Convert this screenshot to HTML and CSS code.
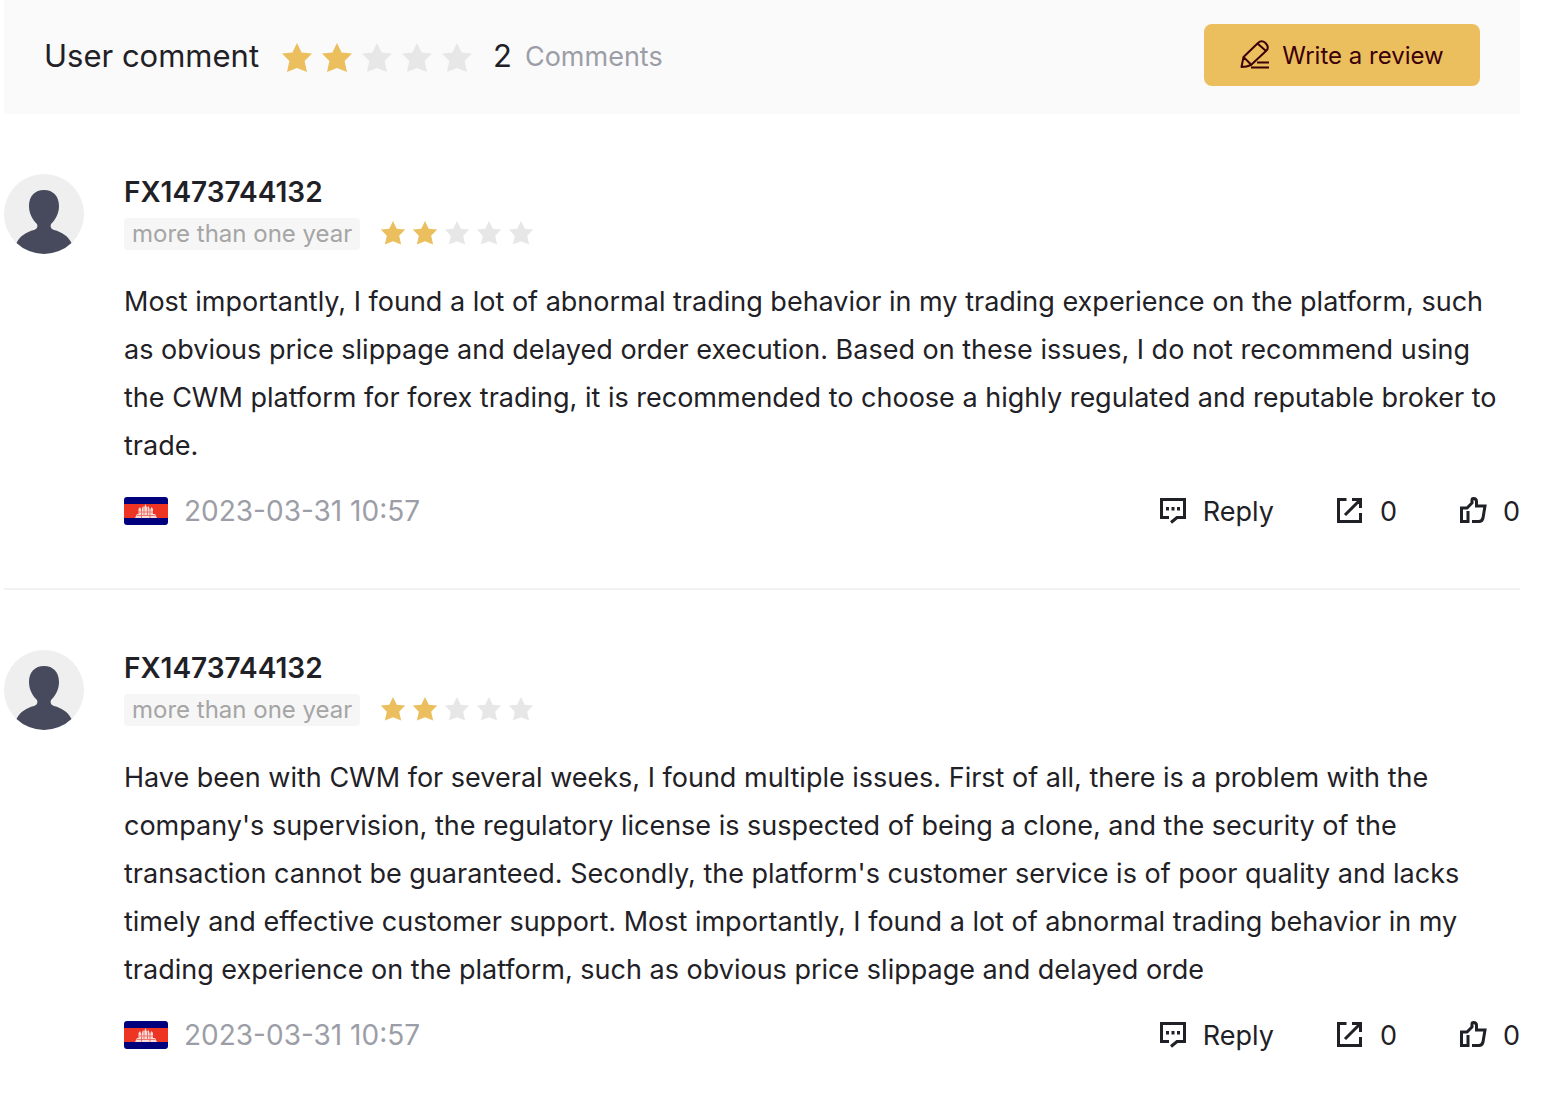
FILE: index.html
```html
<!DOCTYPE html>
<html lang="en">
<head>
  <meta charset="UTF-8" />
  <meta name="viewport" content="width=device-width, initial-scale=1.0" />
  <title>User comment</title>
  <link rel="stylesheet" href="styles.css">
</head>
<body>

  <!-- Shared icons -->
  <svg class="sprite" aria-hidden="true">
    <symbol id="star" viewBox="-1 0 32 32">
      <path d="M15 0 L19.600 9.600 L30 10.600 L22.600 18 L25 29 L15 25 L5 29 L7.400 18 L0 10.600 L10.400 9.600 Z" />
    </symbol>
    <symbol id="avatar" viewBox="0 0 80 80">
      <circle cx="40" cy="40" r="40" fill="#efefef" />
      <path d="M40 16 C49 16 55 22 55 32 C55 40 51 46 47 50 C46 53 47 55 50 56 C58 58 64 62 67.500 69 A40 40 0 0 1 12.500 69 C16 62 22 58 30 56 C33 55 34 53 33 50 C29 46 25 40 25 32 C25 22 31 16 40 16 Z" fill="#464a5c" />
    </symbol>
    <symbol id="flag" viewBox="0 0 44 28">
      <rect width="44" height="28" fill="#00007c" />
      <rect y="7" width="44" height="14" fill="#ee3524" />
      <path d="M11 21 L13 17 H14.500 V12 L16 10 L17.500 13 L19 9 L20 11 L21.500 7 L23 11 L24.500 9 L26 13 L27.500 10 L29 12 V17 H31 L33 21 Z" fill="#f9dcd9" />
      <path d="M14.500 15 H29 M13 18.500 H31 M17.500 12 V21 M20 11 V18 M23.500 11 V18 M26 12 V21" stroke="#ee5a4e" fill="none" stroke-width=".8" />
    </symbol>
    <symbol id="reply" viewBox="0 0 28 28">
      <path d="M10 20.500 H2.500 V2.500 H25.500 V20.500 H18 L12 25.500" />
      <path d="M8.500 10 V13.500 M14 10 V13.500 M19.500 10 V13.500" />
    </symbol>
    <symbol id="share" viewBox="0 0 28 28">
      <path d="M10.500 2.500 H2.500 V24.500 H24.500 V16 M16 2.500 H24.500 V11 M24.500 2.500 L9 18" />
    </symbol>
    <symbol id="like" viewBox="0 0 28 28">
      <path d="M9 14 V24.500 H2.500 V11 H8 L13 6 V3 Q13 1.500 14.500 1.500 Q17.500 1.500 17.500 4.500 V9 H26 L24 21 Q23 24.500 20 24.500 H13" />
    </symbol>
  </svg>

  <main class="comments">
    <header class="summary">
      <h1>User comment</h1>
      <div class="stars stars-large" role="img" aria-label="2 out of 5 stars">
        <svg class="on"><use href="#star" /></svg>
        <svg class="on"><use href="#star" /></svg>
        <svg><use href="#star" /></svg>
        <svg><use href="#star" /></svg>
        <svg><use href="#star" /></svg>
      </div>
      <span class="count">2</span>
      <span class="count-label">Comments</span>
      <button class="write" type="button">
        <svg viewBox="0 0 30 30">
          <path d="M1.500 27 L3.500 17 L18 3 Q21.500 -.5 25.500 3 Q29.500 7 26.500 10.500 L11 25 Q7 27 1.500 27 Z M17.500 3.500 L26 11 M4 17.500 L10.500 24 M17 22.500 H29 M11 27.500 H29" />
        </svg>
        Write a review
      </button>
    </header>

    <article class="comment">
      <svg class="avatar"><use href="#avatar" /></svg>
      <div class="content">
        <h2>FX1473744132</h2>
        <div class="meta">
          <span class="tag">more than one year</span>
          <div class="stars" role="img" aria-label="2 out of 5 stars">
            <svg class="on"><use href="#star" /></svg>
            <svg class="on"><use href="#star" /></svg>
            <svg><use href="#star" /></svg>
            <svg><use href="#star" /></svg>
            <svg><use href="#star" /></svg>
          </div>
        </div>
        <p>Most importantly, I found a lot of abnormal trading behavior in my trading experience on the platform, such as obvious price slippage and delayed order execution. Based on these issues, I do not recommend using the CWM platform for forex trading, it is recommended to choose a highly regulated and reputable broker to trade.</p>
        <footer>
          <svg class="flag"><use href="#flag" /></svg>
          <time>2023-03-31 10:57</time>
          <div class="actions">
            <button type="button"><svg><use href="#reply" /></svg>Reply</button>
            <button type="button" aria-label="Share, 0"><svg><use href="#share" /></svg>0</button>
            <button type="button" aria-label="Like, 0"><svg><use href="#like" /></svg>0</button>
          </div>
        </footer>
      </div>
    </article>

    <article class="comment">
      <svg class="avatar"><use href="#avatar" /></svg>
      <div class="content">
        <h2>FX1473744132</h2>
        <div class="meta">
          <span class="tag">more than one year</span>
          <div class="stars" role="img" aria-label="2 out of 5 stars">
            <svg class="on"><use href="#star" /></svg>
            <svg class="on"><use href="#star" /></svg>
            <svg><use href="#star" /></svg>
            <svg><use href="#star" /></svg>
            <svg><use href="#star" /></svg>
          </div>
        </div>
        <p>Have been with CWM for several weeks, I found multiple issues. First of all, there is a problem with the company's supervision, the regulatory license is suspected of being a clone, and the security of the transaction cannot be guaranteed. Secondly, the platform's customer service is of poor quality and lacks timely and effective customer support. Most importantly, I found a lot of abnormal trading behavior in my trading experience on the platform, such as obvious price slippage and delayed orde</p>
        <footer>
          <svg class="flag"><use href="#flag" /></svg>
          <time>2023-03-31 10:57</time>
          <div class="actions">
            <button type="button"><svg><use href="#reply" /></svg>Reply</button>
            <button type="button" aria-label="Share, 0"><svg><use href="#share" /></svg>0</button>
            <button type="button" aria-label="Like, 0"><svg><use href="#like" /></svg>0</button>
          </div>
        </footer>
      </div>
    </article>
  </main>

</body>
</html>
```
FILE: styles.css
```css
* {
  box-sizing: border-box;
}

body {
  margin: 0;
  background: #fff;
  color: #1f2126;
  font-family: Inter, "Liberation Sans", sans-serif;
  font-size: 27px;
}

h1,
h2,
p {
  margin: 0;
}

button {
  display: flex;
  align-items: center;
  border: 0;
  padding: 0;
  background: none;
  color: inherit;
  font: inherit;
  cursor: pointer;
}

.sprite {
  display: none;
}

.comments {
  margin: 0 26px 0 4px;
}

/* Top bar */
.summary {
  display: flex;
  align-items: center;
  height: 114px;
  padding: 0 40px 4px;
  background: #fafafa;
}

.summary h1 {
  margin-right: 22px;
  font-size: 31px;
  font-weight: 400;
}

.stars {
  display: flex;
  gap: 6px;
}

.stars svg {
  width: 26px;
  height: 26px;
  fill: #e7e7e7;
}

.stars .on {
  fill: #ebbf5e;
}

.stars-large {
  gap: 8px;
  padding-top: 8px;
}

.stars-large svg {
  width: 32px;
  height: 32px;
}

.count {
  margin: 0 13px 0 20px;
  font-size: 31px;
}

.count-label {
  padding-top: 2px;
  color: #9c9ea7;
}

.write {
  justify-content: center;
  gap: 12px;
  width: 276px;
  height: 62px;
  margin-left: auto;
  border-radius: 8px;
  background: #ebbf5e;
  color: #3b0008;
  font-size: 24px;
}

.write svg {
  width: 30px;
  height: 30px;
  fill: none;
  stroke: currentColor;
  stroke-width: 2;
  stroke-linejoin: round;
}

/* Comments */
.comment {
  display: flex;
  gap: 40px;
  padding: 60px 0;
  border-bottom: 2px solid #f1f1f1;
}

.comment:last-child {
  border-bottom: 0;
}

.avatar {
  flex: none;
  width: 80px;
  height: 80px;
}

.content {
  flex: 1;
}

.comment h2 {
  font-size: 28px;
  font-weight: 600;
  line-height: 36px;
}

.meta {
  display: flex;
  align-items: center;
  gap: 20px;
  margin-top: 8px;
}

.tag {
  padding: 0 8px;
  border-radius: 4px;
  background: #f6f6f6;
  color: #a5a5a5;
  font-size: 24px;
  line-height: 32px;
}

.comment p {
  margin-top: 28px;
  padding-right: 4px;
  line-height: 48px;
}

.comment footer {
  display: flex;
  align-items: center;
  height: 34px;
  margin-top: 24px;
}

.flag {
  width: 44px;
  height: 28px;
  margin-right: 16px;
  border-radius: 3px;
}

time {
  color: #9c9ea7;
  font-size: 28px;
}

.actions {
  display: flex;
  gap: 62px;
  margin-left: auto;
}

.actions button {
  gap: 16px;
}

.actions svg {
  width: 28px;
  height: 28px;
  fill: none;
  stroke: currentColor;
  stroke-width: 3;
}
```
